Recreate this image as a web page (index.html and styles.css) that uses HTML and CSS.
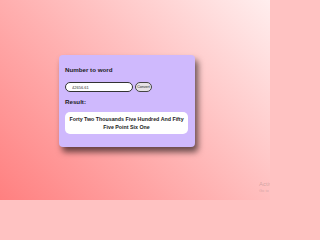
FILE: index.html
```html
<!DOCTYPE html>
<html>
<head>
<meta charset="utf-8">
<link rel="stylesheet" href="styles.css">
</head>
<body>
<div class="card">
  <h2 class="title">Number to word</h2>
  <div class="row">
    <input class="num" type="text" value="42656.61">
    <button class="btn">Convert</button>
  </div>
  <h3 class="label">Result:</h3>
  <div class="result">Forty Two Thousands Five Hundred And Fifty Five Point Six One</div>
</div>
<div class="watermark">
  <div class="wm1">Activate Windows</div>
  <div class="wm2">Go to Settings to activate Windows.</div>
</div>
</body>
</html>
```
FILE: styles.css
```css
html {
  margin: 0;
  padding: 0;
  background: #ffc2c2;
}
body {
  margin: 0;
  width: 270px;
  height: 200px;
  overflow: hidden;
  position: relative;
  font-family: "Liberation Sans", Arial, sans-serif;
  background: linear-gradient(45deg, #ff8080 0%, #ffb6b6 50%, #ffeeee 100%);
  padding: 55px 0 0 59px;
  box-sizing: border-box;
}
.card {
  width: 136px;
  height: 92px;
  box-sizing: border-box;
  background: #cfb9fd;
  border-radius: 4px;
  padding: 11px 7px 0 6px;
  box-shadow: 3px 5px 6px rgba(0, 0, 0, 0.6);
  color: #1a1a1a;
}
.title {
  margin: 0;
  font-size: 6.2px;
  line-height: 8px;
  font-weight: bold;
  color: #1c1c1c;
}
.row {
  display: flex;
  gap: 2px;
  margin-top: 8px;
  height: 10px;
}
.num {
  width: 68px;
  height: 10px;
  box-sizing: border-box;
  border: 1px solid #333;
  border-radius: 6px;
  background: #fff;
  font-family: "Liberation Sans", Arial, sans-serif;
  font-size: 4px;
  padding: 0 0 0 6px;
  margin: 0;
  color: #333;
  outline: none;
}
.btn {
  width: 17px;
  height: 10px;
  box-sizing: border-box;
  border: 1px solid #444;
  border-radius: 6px;
  background: #e6e2e6;
  font-family: "Liberation Sans", Arial, sans-serif;
  font-size: 3.6px;
  padding: 0;
  margin: 0;
  color: #222;
}
.label {
  margin: 6px 0 0 0;
  font-size: 6.2px;
  line-height: 8px;
  font-weight: bold;
  color: #1c1c1c;
}
.result {
  margin-top: 6px;
  background: #fff;
  border-radius: 5px;
  padding: 3px 3px;
  font-size: 5.3px;
  line-height: 8px;
  font-weight: bold;
  text-align: center;
  color: #222;
}
.watermark {
  position: absolute;
  left: 259px;
  top: 181px;
  white-space: nowrap;
  color: rgba(90, 90, 90, 0.3);
}
.wm1 {
  font-size: 6px;
  line-height: 7px;
}
.wm2 {
  font-size: 4px;
  line-height: 6px;
}
```
